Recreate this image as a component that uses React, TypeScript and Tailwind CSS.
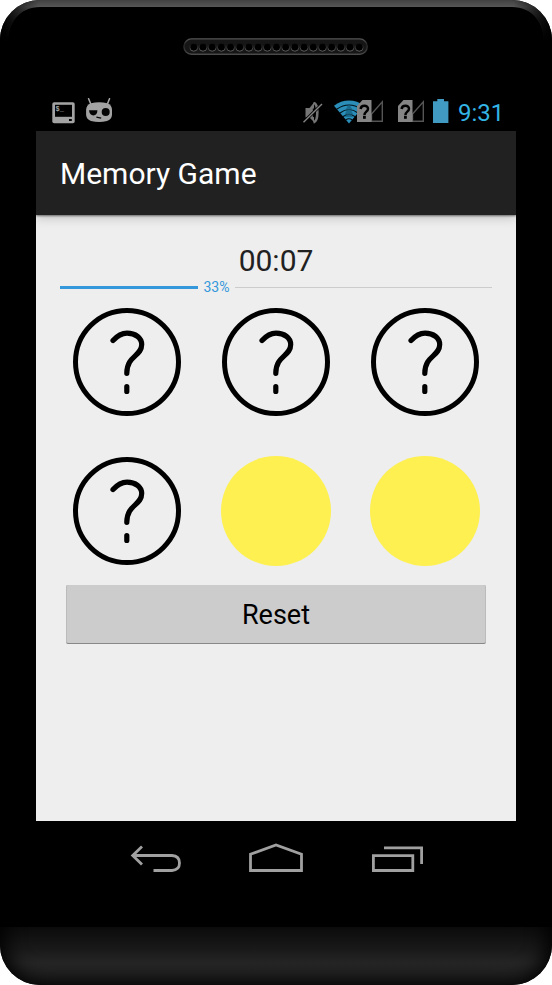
import React from "react";

const speakerHoles = Array.from({ length: 19 }, (_, i) => 10.8 + i * 9.19);

function Rim() {
  return (
    <svg className="absolute left-0 top-0" width="552" height="60" viewBox="0 0 552 60">
      <defs>
        <linearGradient id="rimTop" x1="0" y1="0" x2="0" y2="1">
          <stop offset="0" stopColor="#414141" />
          <stop offset=".16" stopColor="#555" />
          <stop offset=".55" stopColor="#252525" />
          <stop offset="1" stopColor="#000" />
        </linearGradient>
        <linearGradient id="rimSides" x1="0" y1="0" x2="1" y2="0">
          <stop offset="0" stopColor="#000" />
          <stop offset=".016" stopColor="#000" stopOpacity=".75" />
          <stop offset=".07" stopColor="#000" stopOpacity="0" />
          <stop offset=".93" stopColor="#000" stopOpacity="0" />
          <stop offset=".984" stopColor="#000" stopOpacity=".75" />
          <stop offset="1" stopColor="#000" />
        </linearGradient>
      </defs>
      <path d="M0 42V0H552V42H544C544 22 532 7 512 7H40C20 7 8 22 8 42Z" fill="url(#rimTop)" />
      <path d="M0 42V0H552V42H544C544 22 532 7 512 7H40C20 7 8 22 8 42Z" fill="url(#rimSides)" />
    </svg>
  );
}

function Speaker() {
  return (
    <svg width="186" height="18" viewBox="0 0 186 18">
      <defs>
        <linearGradient id="slot" x1="0" y1="0" x2="0" y2="1">
          <stop offset="0" stopColor="#555" />
          <stop offset=".35" stopColor="#262626" />
          <stop offset=".7" stopColor="#333" />
          <stop offset="1" stopColor="#4a4a4a" />
        </linearGradient>
        <linearGradient id="holeEdge" x1="0" y1="0" x2="0" y2="1">
          <stop offset=".2" stopColor="#161616" />
          <stop offset="1" stopColor="#6a6a6a" />
        </linearGradient>
      </defs>
      <rect x=".9" y=".9" width="183.4" height="15.4" rx="7.7" fill="#161616" stroke="url(#slot)" strokeWidth="1.4" />
      {speakerHoles.map((x) => (
        <circle key={x} cx={x} cy="9.2" r="4" fill="#000" stroke="url(#holeEdge)" strokeWidth=".9" />
      ))}
    </svg>
  );
}

function TerminalIcon() {
  return (
    <svg width="23" height="22" viewBox="0 0 23 22">
      <rect x=".3" y=".2" width="22.4" height="21" rx="1.8" fill="#a3a3a3" />
      <rect x="3" y="2.8" width="17" height="12" fill="#000" />
      <text x="3.6" y="9" fontSize="7" fontWeight="bold" fill="#a3a3a3" fontFamily="Liberation Mono">$_</text>
      <rect x="17" y="17" width="2.8" height="2" fill="#000" />
    </svg>
  );
}

function CidIcon() {
  return (
    <svg width="27" height="25" viewBox="0 0 27 25">
      <path d="M2.6.8 4.8 6M23.5.8 21.4 6" stroke="#a3a3a3" strokeWidth="1.6" strokeLinecap="round" />
      <path d="M5 5.3Q13 3.2 21.3 5.3Q26 7 26 12v5Q25.6 21.5 21 23Q13 25 5 23Q.6 21.5.1 17v-5Q.2 7 5 5.3Z" fill="#a3a3a3" />
      <path d="M3 12.3H11.4C11.4 15.6 10 17.5 7.4 17.5S3.4 15.5 3 12.3Z" fill="#050505" />
      <circle cx="19.7" cy="14.1" r="4" fill="#050505" />
      <path d="M10.4 19.2l4.8 1" stroke="#050505" strokeWidth="1.2" />
    </svg>
  );
}

function MuteIcon() {
  return (
    <svg width="21" height="22" viewBox="0 0 21 22">
      <path d="M2.5 6h4L11 .5V20L6.5 15.5h-4Z" fill="#757575" />
      <path d="M10.5.8C15.6 2 15.6 19 10.5 20.4" fill="none" stroke="#757575" strokeWidth="2.6" />
      <path d="M10.4 6.5V15" stroke="#000" strokeWidth="1.1" />
      <path d="M.5 20.2 19 2" stroke="#000" strokeWidth="3" />
      <path d="M.5 20.2 19 2" stroke="#858585" strokeWidth="1.4" />
    </svg>
  );
}

function WifiIcon() {
  return (
    <svg width="30" height="24" viewBox="0 0 30 24">
      <path d="M15 23.5 0 5.7C8.5-1.2 21.5-1.2 30 5.7Z" fill="#2a8eb9" />
      <g fill="none" stroke="#04131a" strokeWidth="1.2">
        <path d="M2.7 9.2Q15 .8 27.3 9.2" />
        <path d="M6 13Q15 6 24 13" />
        <path d="M8.8 16.8Q15 12 21.2 16.8" />
        <path d="M11.6 20Q15 17.5 18.4 20" />
      </g>
      <path d="m15 4 3 5h-1.5l2.5 5h-2l2 3h-8l2-3h-2l2.5-5H12Z" fill="#146080" opacity=".75" />
    </svg>
  );
}

function SimIcon() {
  return (
    <svg width="27" height="24" viewBox="0 0 27 24">
      <path d="M14.5 22.3V15L25.3 2.8V22.3Z" fill="none" stroke="#555" strokeWidth="1.4" />
      <path d="M0 23V7L5.5 1H14.5V23Z" fill="#858585" />
      <path d="M3.6 10C4.1 5.8 11 5.8 11 9.7C11 12.8 7.4 12.6 7.4 16.2" fill="none" stroke="#000" strokeWidth="2.5" />
      <rect x="6" y="17" width="2.8" height="2.8" fill="#000" />
    </svg>
  );
}

function BatteryIcon() {
  return (
    <svg width="16" height="24" viewBox="0 0 16 24">
      <path d="M0 2.3H4.3V0H11V2.3H15.4V24H0Z" fill="#419ac1" />
    </svg>
  );
}

function QuestionCard() {
  return (
    <button className="h-[110px] w-[110px]" aria-label="Hidden card">
      <svg width="110" height="110" viewBox="0 0 110 110" fill="none" stroke="#000">
        <circle cx="55" cy="55" r="51.5" strokeWidth="5" />
        <path d="M41 33.6C45.7 28.4 49.3 26.2 55 26.2C63.5 26.2 69.7 31 69.7 37.6C69.7 49.3 54.8 48.5 54.8 66.3M54.8 79.5V84.5" strokeWidth="5.2" strokeLinecap="round" />
      </svg>
    </button>
  );
}

function ColorCard() {
  return <button className="h-[110px] w-[110px] rounded-full bg-[#fdf050]" aria-label="Yellow card" />;
}

export default function App() {
  return (
    <div className="h-[985px] w-[552px] overflow-hidden bg-white font-[Roboto,sans-serif]">
      <div className="relative flex h-full w-full flex-col overflow-hidden rounded-[40px] bg-black">
        <Rim />
        <div className="flex h-[94px] shrink-0 justify-center pt-[38px]">
          <Speaker />
        </div>

        <div className="mx-9 flex h-[37px] shrink-0 items-start pl-4 pt-[5px]">
          <div className="mt-[3px]"><TerminalIcon /></div>
          <div className="ml-[11px] -mt-px"><CidIcon /></div>
          <div className="ml-[190px] mt-[3px]"><MuteIcon /></div>
          <div className="ml-2.5 mt-px"><WifiIcon /></div>
          <div className="relative -ml-[7px]"><SimIcon /></div>
          <div className="ml-3.5"><SimIcon /></div>
          <div className="ml-2"><BatteryIcon /></div>
          <span className="ml-[9px] mt-0.5 text-2xl leading-6 text-[#33b5e5]">9:31</span>
        </div>

        <main className="mx-9 flex h-[690px] shrink-0 flex-col bg-[#eee]">
          <header className="flex h-[84px] shrink-0 items-center bg-[#212121] pl-6 text-[30px] text-white shadow-[0_1px_2px_rgba(0,0,0,0.5),0_3px_10px_rgba(0,0,0,0.18)] [clip-path:inset(0_0_-16px_0)]">
            <h1>Memory Game</h1>
          </header>
          <div className="flex flex-col px-6 pt-[26px]">
            <div className="h-10 text-center text-[30px] leading-10 text-[#212121]">00:07</div>
            <div className="flex h-3 items-center">
              <div className="h-[3px] w-[138px] bg-[#3498db]" />
              <span className="w-[37px] text-center text-sm leading-3 text-[#3498db]">33%</span>
              <div className="h-px flex-1 bg-[#ccc]" />
            </div>
            <div className="grid grid-cols-[110px_110px_110px] justify-center gap-[39px] pt-[14px]">
              <QuestionCard />
              <QuestionCard />
              <QuestionCard />
              <QuestionCard />
              <ColorCard />
              <ColorCard />
            </div>
            <button className="mx-1.5 mt-[19px] h-[58px] rounded-[2px] bg-[#ccc] pt-0.5 text-[27px] text-black shadow-[0_1px_0_#888,inset_-1px_0_0_#bbb,inset_1px_0_0_#bbb]">Reset</button>
          </div>
        </main>

        <nav className="flex h-[106px] shrink-0 justify-between pl-[130px] pr-[128px] pt-5">
          <svg width="52" height="32" viewBox="0 0 52 32" fill="none" stroke="#a0a0a0" strokeWidth="2.8">
            <path d="M3 14.5H42Q49.5 15 49.5 22T42 29.5H23.5" />
            <path d="M12 5.4 2.7 14.5 12 23.6" />
          </svg>
          <svg width="56" height="32" viewBox="0 0 56 32" fill="none" stroke="#a0a0a0" strokeWidth="2.8">
            <path d="M2.5 29.5V13.2L28 4L53.5 13.2V29.5Z" />
          </svg>
          <svg width="54" height="32" viewBox="0 0 54 32" fill="none" stroke="#a0a0a0" strokeWidth="2.8">
            <path d="M3.4 14.6H42.8V29.5H3.4Z" />
            <path d="M14 6.8H51.6V23" />
          </svg>
        </nav>

        <div className="h-[58px] shrink-0 overflow-hidden bg-[linear-gradient(#0b0b0b,#191919_38%,#262626_62%,#282828)]">
          <div className="-mt-20 h-[138px] rounded-b-[40px] shadow-[inset_0_0_20px_5px_#000]" />
        </div>
      </div>
    </div>
  );
}
